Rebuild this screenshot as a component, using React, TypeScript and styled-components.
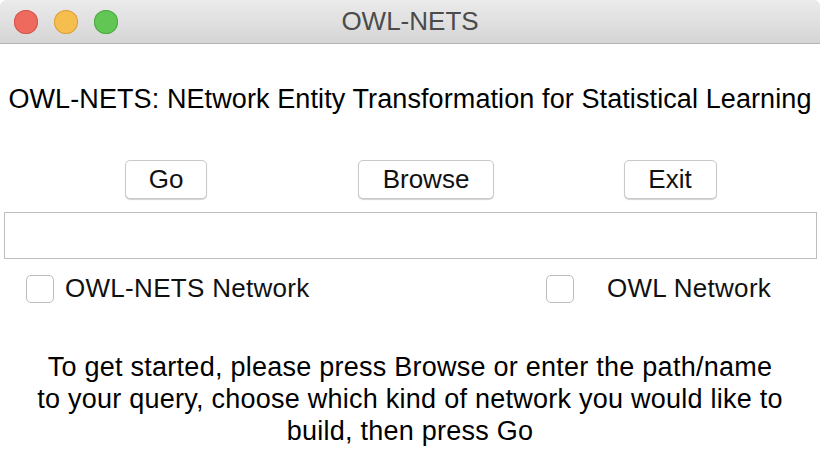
import styled, { createGlobalStyle } from 'styled-components';

const GlobalStyle = createGlobalStyle`
  html, body {
    margin: 0;
    padding: 0;
    background: #ffffff;
  }
  body {
    font-family: 'Liberation Sans', Arial, sans-serif;
    color: #000000;
  }
`;

const Window = styled.div`
  width: 820px;
  height: 476px;
  display: flex;
  flex-direction: column;
  background: #ffffff;
  overflow: hidden;
`;

const TitleBar = styled.div`
  position: relative;
  height: 43px;
  flex: none;
  display: flex;
  align-items: center;
  justify-content: center;
  background: linear-gradient(#ebebeb, #d5d5d5);
  border-bottom: 1px solid #b4b4b4;
  border-radius: 6px 6px 0 0;
`;

const Lights = styled.div`
  position: absolute;
  left: 14px;
  top: 10px;
  display: flex;
  gap: 16px;
`;

const Light = styled.span<{ fill: string; edge: string }>`
  width: 24px;
  height: 24px;
  border-radius: 50%;
  background: ${({ fill }) => fill};
  box-shadow: inset 0 0 0 1px ${({ edge }) => edge};
`;

const Title = styled.div`
  font-size: 26px;
  color: #4b4b4b;
`;

const Heading = styled.div`
  margin-top: 38px;
  text-align: center;
  font-size: 27px;
  line-height: 34px;
  letter-spacing: 0.1px;
  white-space: nowrap;
`;

const ButtonRow = styled.div`
  margin-top: 44px;
  display: grid;
  grid-template-columns: 332px 188px 300px;
  justify-items: center;
`;

const Button = styled.button<{ w: number }>`
  width: ${({ w }) => w}px;
  height: 39px;
  padding: 0;
  background: #ffffff;
  border: 1px solid #c9c9c9;
  border-radius: 5px;
  box-shadow: 0 1px 1px rgba(0, 0, 0, 0.18);
  font-family: 'Liberation Sans', Arial, sans-serif;
  font-size: 26px;
  color: #111111;
`;

const PathInput = styled.input`
  margin: 13px 3px 0 4px;
  height: 47px;
  box-sizing: border-box;
  border: 1px solid #bdbdbd;
  background: #ffffff;
  outline: none;
  font-size: 22px;
`;

const CheckRow = styled.div`
  margin-top: 14px;
  display: grid;
  grid-template-columns: 520px 1fr;
  padding-left: 26px;
`;

const CheckLabel = styled.label<{ gap: number }>`
  display: flex;
  align-items: center;
  gap: ${({ gap }) => gap}px;
  font-size: 26px;
  letter-spacing: 0.3px;
  color: #111111;
`;

const Box = styled.span`
  width: 28px;
  height: 28px;
  box-sizing: border-box;
  border: 1px solid #bcbcbc;
  border-radius: 5px;
  background: #ffffff;
`;

const Help = styled.div`
  margin-top: 47px;
  text-align: center;
  font-size: 27px;
  line-height: 32px;
  letter-spacing: 0.25px;
  color: #000000;
`;

export default function App() {
  return (
    <>
      <GlobalStyle />
      <Window>
        <TitleBar>
          <Lights>
            <Light fill="#ee6a5f" edge="#d5544a" />
            <Light fill="#f6be4f" edge="#d9a03c" />
            <Light fill="#62c655" edge="#4ea843" />
          </Lights>
          <Title>OWL-NETS</Title>
        </TitleBar>
        <Heading>OWL-NETS: NEtwork Entity Transformation for Statistical Learning</Heading>
        <ButtonRow>
          <Button w={82}>Go</Button>
          <Button w={136}>Browse</Button>
          <Button w={93}>Exit</Button>
        </ButtonRow>
        <PathInput />
        <CheckRow>
          <CheckLabel gap={11}>
            <Box />
            OWL-NETS Network
          </CheckLabel>
          <CheckLabel gap={33}>
            <Box />
            OWL Network
          </CheckLabel>
        </CheckRow>
        <Help>
          To get started, please press Browse or enter the path/name
          <br />
          to your query, choose which kind of network you would like to
          <br />
          build, then press Go
        </Help>
      </Window>
    </>
  );
}
